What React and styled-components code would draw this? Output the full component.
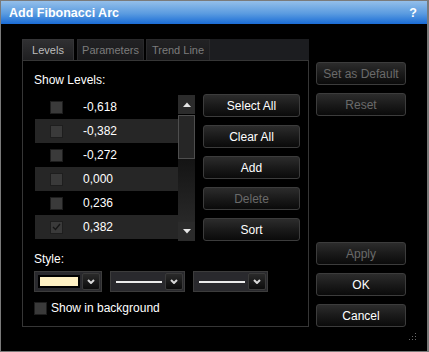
import React from "react";
import styled, { createGlobalStyle } from "styled-components";

const Global = createGlobalStyle`
  html, body { margin: 0; padding: 0; background: #000; }
  body { font-family: "Liberation Sans", Arial, sans-serif; font-size: 12px; color: #fff; }
  * { box-sizing: border-box; }
`;

const Window = styled.div`
  position: relative;
  width: 429px;
  height: 352px;
  display: flex;
  flex-direction: column;
  border: 1px solid #7a7a7a;
  border-right-width: 2px;
  background: #000;
`;

const TitleBar = styled.div`
  height: 23px;
  flex: none;
  display: flex;
  align-items: center;
  justify-content: space-between;
  padding: 0 10px 0 8px;
  background: linear-gradient(#94bfea, #5a9be0 55%, #1a6cd6);
  color: #fff;
  font-weight: bold;
  font-size: 12.5px;
`;

const Body = styled.div`
  flex: 1;
  display: flex;
  padding: 15px 21px 24px 21px;
`;

const LeftCol = styled.div`
  width: 287px;
  display: flex;
  flex-direction: column;
`;

const TabStrip = styled.div`
  height: 21px;
  display: flex;
  flex: none;
`;

const Tab = styled.div`
  width: ${p => p.$w}px;
  margin-right: ${p => p.$mr}px;
  display: flex;
  align-items: center;
  justify-content: center;
  font-size: 11px;
  color: ${p => (p.$active ? "#bdbdbd" : "#7c7c7c")};
  background: ${p => (p.$active ? "linear-gradient(#303032, #1e1e20)" : "linear-gradient(#222224, #1a1a1c)")};
  border: 1px solid ${p => (p.$active ? "#353537" : "#29292b")};
  border-bottom: none;
`;

const TabFill = styled.div`
  flex: 1;
  background: #1c1d20;
`;

const Panel = styled.div`
  flex: 1;
  border: 1px solid #363636;
  display: flex;
  flex-direction: column;
  padding: 12px 8px 0 11px;
`;

const Label = styled.div`
  height: 14px;
  line-height: 14px;
  color: #fff;
  font-size: 12px;
`;

const LevelsArea = styled.div`
  display: flex;
  align-items: flex-start;
  margin-top: 8px;
  margin-left: 1px;
`;

const List = styled.div`
  width: 143px;
  display: flex;
  flex-direction: column;
`;

const Row = styled.div`
  height: 24px;
  display: flex;
  align-items: center;
  padding-left: 15px;
  background: ${p => (p.$alt ? "#262626" : "transparent")};
`;

const Check = styled.span`
  width: 13px;
  height: 13px;
  flex: none;
  background: #3a3a3a;
  border: 1px solid #1e1e1e;
  display: flex;
  align-items: center;
  justify-content: center;
`;

const Value = styled.span`
  margin-left: 20px;
  color: #fff;
  font-size: 12px;
`;

const Scrollbar = styled.div`
  width: 17px;
  height: 146px;
  display: flex;
  flex-direction: column;
`;

const ScrollBtn = styled.div`
  height: 19px;
  flex: none;
  background: #2b2b2b;
  display: flex;
  align-items: center;
  justify-content: center;
`;

const Thumb = styled.div`
  height: 44px;
  margin-top: 1px;
  flex: none;
  border: 1px solid #4e4e4e;
  background: #262626;
`;

const Track = styled.div`
  flex: 1;
  background: linear-gradient(#141414, #282828);
`;

const ButtonCol = styled.div`
  display: flex;
  flex-direction: column;
  gap: 8px;
  margin-left: 8px;
  margin-top: -1px;
`;

const Button = styled.div`
  width: ${p => p.$w || 97}px;
  height: 23px;
  border: 1px solid #3c3c3c;
  border-radius: 3px;
  background: linear-gradient(#2c2c2c, #1a1a1a 50%, #0a0a0a);
  display: flex;
  align-items: center;
  justify-content: center;
  font-size: 12px;
  color: ${p => (p.$disabled ? "#6a6a6a" : "#fff")};
`;

const StyleLabel = styled(Label)`
  margin-top: 11px;
`;

const ComboRow = styled.div`
  display: flex;
  gap: 8px;
  margin-top: 5px;
`;

const Combo = styled.div`
  width: ${p => p.$w}px;
  height: 21px;
  display: flex;
  align-items: center;
  border: 1px solid #3c3c3c;
  background: #29292d;
  padding: 1px;
`;

const Swatch = styled.div`
  width: 42px;
  height: 13px;
  margin: 0 2px 0 2px;
  border: 2px solid #000;
  background: #fff1c4;
`;

const LineArea = styled.div`
  flex: 1;
  padding: 0 3px 0 4px;
`;

const Line = styled.div`
  height: 2px;
  background: #ececec;
`;

const DropBtn = styled.div`
  width: 18px;
  height: 17px;
  margin-left: auto;
  border: 1px solid #3a3a3a;
  border-radius: 2px;
  background: linear-gradient(#2a2a2a, #0c0c0c);
  display: flex;
  align-items: center;
  justify-content: center;
`;

const BgRow = styled.div`
  display: flex;
  align-items: center;
  gap: 4px;
  margin-top: 9px;
  height: 14px;
`;

const RightCol = styled.div`
  width: 90px;
  margin-left: 7px;
  display: flex;
  flex-direction: column;
  padding-top: 23px;
`;

const BtnGroup = styled.div`
  display: flex;
  flex-direction: column;
  gap: 8px;
  margin-top: ${p => (p.$bottom ? "auto" : "0")};
`;

const Grip = styled.svg`
  position: absolute;
  right: 10px;
  bottom: 10px;
`;

const Chevron = () => (
  <svg width="8" height="5" viewBox="0 0 8 5">
    <polyline points="1,1 4,4 7,1" fill="none" stroke="#d8d8d8" strokeWidth="2" />
  </svg>
);

const levels = [
  { v: "-0,618" },
  { v: "-0,382" },
  { v: "-0,272" },
  { v: "0,000" },
  { v: "0,236" },
  { v: "0,382", checked: true },
];

export default function App() {
  return (
    <>
      <Global />
      <Window>
        <TitleBar>
          <span>Add Fibonacci Arc</span>
          <span>?</span>
        </TitleBar>
        <Body>
          <LeftCol>
            <TabStrip>
              <Tab $w={52} $mr={3} $active>Levels</Tab>
              <Tab $w={67} $mr={2}>Parameters</Tab>
              <Tab $w={64} $mr={0}>Trend Line</Tab>
              <TabFill />
            </TabStrip>
            <Panel>
              <Label>Show Levels:</Label>
              <LevelsArea>
                <List>
                  {levels.map((l, i) => (
                    <Row key={l.v} $alt={i % 2 === 1}>
                      <Check>
                        {l.checked && (
                          <svg width="9" height="8" viewBox="0 0 9 8">
                            <polyline points="1,4 3.5,6.5 8,1" fill="none" stroke="#151515" strokeWidth="1.3" />
                          </svg>
                        )}
                      </Check>
                      <Value>{l.v}</Value>
                    </Row>
                  ))}
                </List>
                <Scrollbar>
                  <ScrollBtn>
                    <svg width="8" height="5" viewBox="0 0 8 5">
                      <polygon points="0,5 4,0.5 8,5" fill="#e6e6e6" />
                    </svg>
                  </ScrollBtn>
                  <Thumb />
                  <Track />
                  <ScrollBtn>
                    <svg width="8" height="5" viewBox="0 0 8 5">
                      <polygon points="0,0 8,0 4,4.5" fill="#e6e6e6" />
                    </svg>
                  </ScrollBtn>
                </Scrollbar>
                <ButtonCol>
                  <Button>Select All</Button>
                  <Button>Clear All</Button>
                  <Button>Add</Button>
                  <Button $disabled>Delete</Button>
                  <Button>Sort</Button>
                </ButtonCol>
              </LevelsArea>
              <StyleLabel>Style:</StyleLabel>
              <ComboRow>
                <Combo $w={68}>
                  <Swatch />
                  <DropBtn><Chevron /></DropBtn>
                </Combo>
                <Combo $w={75}>
                  <LineArea><Line /></LineArea>
                  <DropBtn><Chevron /></DropBtn>
                </Combo>
                <Combo $w={75}>
                  <LineArea><Line /></LineArea>
                  <DropBtn><Chevron /></DropBtn>
                </Combo>
              </ComboRow>
              <BgRow>
                <Check />
                <Label>Show in background</Label>
              </BgRow>
            </Panel>
          </LeftCol>
          <RightCol>
            <BtnGroup>
              <Button $w={90} $disabled>Set as Default</Button>
              <Button $w={90} $disabled>Reset</Button>
            </BtnGroup>
            <BtnGroup $bottom>
              <Button $w={90} $disabled>Apply</Button>
              <Button $w={90}>OK</Button>
              <Button $w={90}>Cancel</Button>
            </BtnGroup>
          </RightCol>
        </Body>
        <Grip width="9" height="9" viewBox="0 0 9 9">
          {[[7, 1], [7, 4], [4, 4], [7, 7], [4, 7], [1, 7]].map(([x, y]) => (
            <rect key={`${x}-${y}`} x={x} y={y} width="1" height="1" fill="#6a6a6a" />
          ))}
        </Grip>
      </Window>
    </>
  );
}
